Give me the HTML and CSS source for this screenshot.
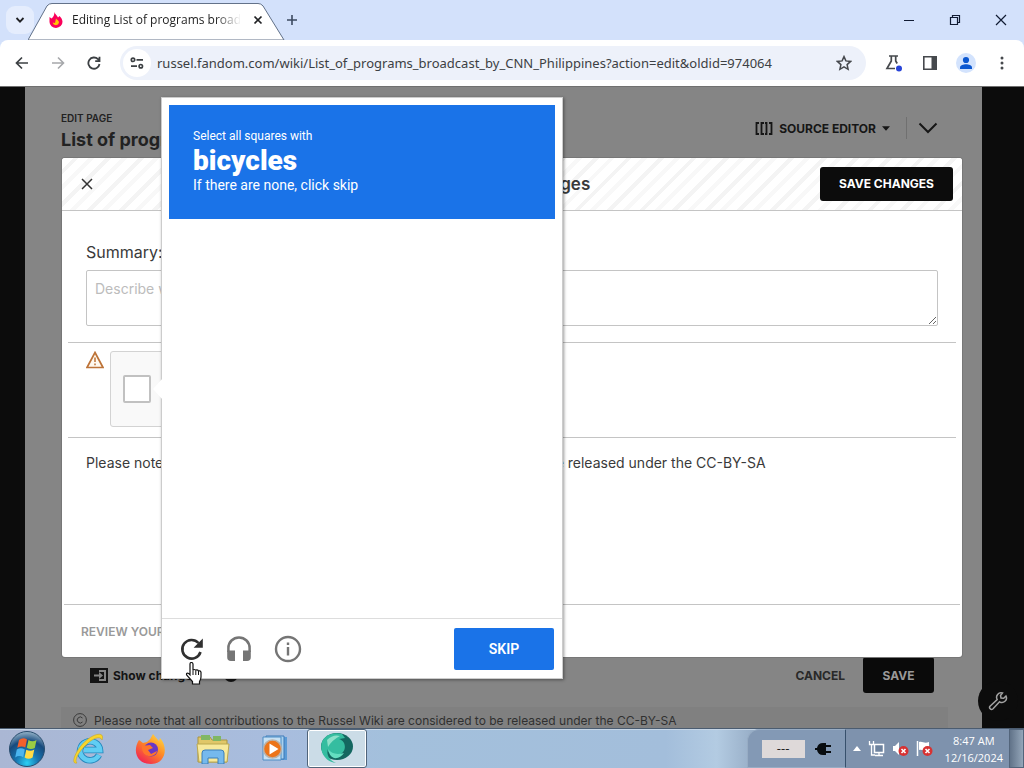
FILE: index.html
```html
<!DOCTYPE html>
<html lang="en">
<head>
<meta charset="utf-8">
<title>Editing List of programs broadcast by CNN Philippines</title>
<link rel="stylesheet" href="styles.css">
</head>
<body>
<header class="tabstrip">
  <button class="tab-search" aria-label="Search tabs"><svg width="10" height="10" viewBox="0 0 10 10"><path d="M1.5 3l3.5 3.600L8.500 3" fill="none" stroke="#202124" stroke-width="1.800"/></svg></button>
  <div class="tab">
    <svg class="tab-shape" viewBox="0 0 260 38" preserveAspectRatio="none"><path d="M0 38L19 3Q21 .5 24 .5H230Q233 .5 235 3L256 38Z" fill="#fff" stroke="#5f6f86"/></svg>
    <svg class="flame" width="14" height="16" viewBox="0 0 14 16"><path d="M5.500 0C6 2 8 3.500 9 5.500L10.500 4C12 5.500 13.500 7.500 13.500 9.800A6.500 6 0 0 1 .5 10V5L2.500 6.500C4.500 5 5.500 2.500 5.500 0Z" fill="#fa005a"/><path d="M7 6.500C8 8 10 8.500 10 10.500A3.200 3.200 0 0 1 3.700 10.500L6 11Z" fill="#ffc500"/></svg>
    <span class="tab-title">Editing List of programs broad</span>
    <button class="tab-close" aria-label="Close tab"><svg width="10" height="10" viewBox="0 0 10 10"><path d="M1.500 1.500l7 7m0-7l-7 7" stroke="#202124" stroke-width="1.700"/></svg></button>
  </div>
  <button class="new-tab" aria-label="New tab"><svg width="12" height="12" viewBox="0 0 12 12"><path d="M6 1v10M1 6h10" stroke="#3c4a60" stroke-width="1.600"/></svg></button>
  <div class="window-buttons">
    <button aria-label="Minimize"><svg width="12" height="12" viewBox="0 0 12 12"><path d="M1 6.500h10" stroke="#111b33"/></svg></button>
    <button aria-label="Restore"><svg width="12" height="12" viewBox="0 0 12 12"><path d="M1.500 3.500h7v7h-7zM3.500 3.500v-2h7v7h-2" fill="none" stroke="#111b33" stroke-width="1.200"/></svg></button>
    <button aria-label="Close"><svg width="12" height="12" viewBox="0 0 12 12"><path d="M1 1l10 10M11 1L1 11" stroke="#111b33" stroke-width="1.200"/></svg></button>
  </div>
</header>
<nav class="toolbar">
  <button aria-label="Back"><svg width="14" height="14" viewBox="0 0 14 14"><path d="M13 7H2M7 1.500L1.500 7 7 12.500" fill="none" stroke="#3c4043" stroke-width="1.700"/></svg></button>
  <button aria-label="Forward"><svg width="14" height="14" viewBox="0 0 14 14"><path d="M1 7h11M7 1.500L12.500 7 7 12.500" fill="none" stroke="#a6a8ab" stroke-width="1.600"/></svg></button>
  <button aria-label="Reload"><svg width="14" height="14" viewBox="0 0 14 14"><path d="M12.500 8A5.600 5.600 0 1 1 11 3.200L12.200 4.500M12.500 .8v4.400H8.200" fill="none" stroke="#3c4043" stroke-width="1.800"/></svg></button>
  <div class="omnibox">
    <button class="site-info" aria-label="View site information"><svg width="14" height="12" viewBox="0 0 14 12"><g fill="none" stroke="#3c4043" stroke-width="1.700"><circle cx="3" cy="2.800" r="1.700"/><path d="M6.500 2.800H13M1 9.200h6"/><circle cx="10.800" cy="9.200" r="1.700"/></g></svg></button>
    <input class="address" aria-label="Address" value="russel.fandom.com/wiki/List_of_programs_broadcast_by_CNN_Philippines?action=edit&amp;oldid=974064">
    <button class="star" aria-label="Bookmark"><svg width="16" height="16" viewBox="0 0 16 16"><path d="M8 1.600l1.900 4.300 4.700.5-3.500 3.200 1 4.700L8 11.900l-4.100 2.400 1-4.700L1.400 6.400l4.700-.5z" fill="none" stroke="#46494d" stroke-width="1.500"/></svg></button>
  </div>
  <div class="tools">
    <button aria-label="Experiments"><svg width="18" height="18" viewBox="0 0 18 18"><path d="M4 2h9M6.300 2v5L2 14.500h8M10.700 2v5l1.500 2.500" fill="none" stroke="#46494d" stroke-width="1.700"/><circle cx="14" cy="14.500" r="3" fill="#2844d8"/></svg></button>
    <button aria-label="Side panel"><svg width="14" height="14" viewBox="0 0 14 14"><path d="M.8.8h12.400v12.400H.8z" fill="none" stroke="#46494d" stroke-width="1.600"/><path d="M8.500 1H13v12H8.500z" fill="#46494d"/></svg></button>
    <button aria-label="Profile"><svg width="20" height="20" viewBox="0 0 20 20"><circle cx="10" cy="10" r="10" fill="#d3e3fd"/><circle cx="10" cy="7" r="3.100" fill="#0b57d0"/><path d="M4 16v-1.500C4 12.300 7.500 11.200 10 11.200s6 1.100 6 3.300V16z" fill="#0b57d0"/></svg></button>
    <button aria-label="Menu"><svg width="4" height="16" viewBox="0 0 4 16"><g fill="#46494d"><circle cx="2" cy="3" r="1.500"/><circle cx="2" cy="8" r="1.500"/><circle cx="2" cy="13" r="1.500"/></g></svg></button>
  </div>
</nav>

<main class="viewport">
  <section class="page">
    <div class="page-head">
      <div>
        <p class="eyebrow">EDIT PAGE</p>
        <h1 class="page-title">List of programs</h1>
      </div>
      <div class="page-actions">
        <button class="source"><svg width="18" height="13" viewBox="0 0 18 13"><path d="M4 1H1.500v11H4M9 1H6.500v11H9M10 1h1.500v11H10M14 1h2.500v11H14" fill="none" stroke="#161616" stroke-width="1.800"/></svg>SOURCE EDITOR<svg width="8" height="5" viewBox="0 0 8 5"><path d="M0 .3h8L4 4.700z" fill="#161616"/></svg></button>
        <button class="collapse" aria-label="Collapse"><svg width="20" height="12" viewBox="0 0 20 12"><path d="M1.500 1.500L10 10l8.500-8.500" fill="none" stroke="#161616" stroke-width="2"/></svg></button>
      </div>
    </div>
    <div class="page-foot">
      <div class="foot-row">
        <button class="show"><svg width="18" height="15" viewBox="0 0 18 15"><path d="M0 0h18v15H0z" fill="#141414"/><path d="M9 2h7v11H9v-2h5V4H9zM4 6.500h5V4l4 3.500L9 11V8.500H4z" fill="#858585"/></svg>Show changes</button>
        <button class="help" aria-label="Help"><svg width="16" height="16" viewBox="0 0 16 16"><circle cx="8" cy="8" r="7" fill="#141414"/></svg></button>
        <button class="cancel">CANCEL</button>
        <button class="save">SAVE</button>
      </div>
      <p class="notice"><svg width="14" height="14" viewBox="0 0 14 14"><g fill="none" stroke="#393939"><circle cx="7" cy="7" r="6.400"/><path d="M9.500 5A3 3 0 1 0 9.500 9"/></g></svg>Please note that all contributions to the Russel Wiki are considered to be released under the CC-BY-SA</p>
    </div>
  </section>
  <button class="wrench" aria-label="My tools"><svg width="20" height="20" viewBox="0 0 20 20"><path d="M2 15.200L9.200 8.500A4.500 4.500 0 0 1 14.500 2L12.500 4.500l.5 2.500 2.700.2L18 5A4.500 4.500 0 0 1 11.600 10.800L4.800 18A2 2 0 0 1 2 15.200Z" fill="none" stroke="#a2a2a2" stroke-width="1.500"/></svg></button>

  <div class="overlay">
    <form class="dialog" role="dialog" aria-labelledby="dialog-title">
      <div class="dialog-head">
        <button type="button" class="dismiss" aria-label="Close dialog"><svg width="12" height="12" viewBox="0 0 12 12"><path d="M1 1l10 10M11 1L1 11" stroke="#333" stroke-width="1.500"/></svg></button>
        <h2 id="dialog-title">Save your changes</h2>
        <button type="button" class="save-changes">SAVE CHANGES</button>
      </div>
      <div class="dialog-body">
        <div class="summary">
          <label for="summary">Summary:</label>
          <textarea id="summary" placeholder="Describe what you changed"></textarea>
        </div>
        <div class="verify">
          <svg width="18" height="18" viewBox="0 0 18 18"><path d="M9 1.500L17 16.500H1z" fill="#fff9ef" stroke="#bd7338" stroke-width="1.700"/><path d="M9 6.500v4.500M9 12.500v1.700" stroke="#bd7338" stroke-width="1.500"/></svg>
          <label class="robot"><input type="checkbox">I'm not a robot</label>
        </div>
        <p class="license">Please note that all contributions to the Russel Wiki are considered to be released under the CC-BY-SA</p>
      </div>
      <div class="dialog-foot"><button type="button">REVIEW YOUR CHANGES</button></div>
    </form>
  </div>

  <section class="challenge" aria-label="Image challenge">
    <div class="prompt">
      <p>Select all squares with</p>
      <strong>bicycles</strong>
      <p class="hint">If there are none, click skip</p>
    </div>
    <div class="tiles"></div>
    <div class="challenge-foot">
      <button aria-label="Get a new challenge"><svg width="24" height="24" viewBox="0 0 24 24"><path d="M20.500 15A9.300 9.300 0 1 1 18.500 6" fill="none" stroke="#303030" stroke-width="2.600"/><path d="M22.800 1.500v9.200h-9.200z" fill="#303030"/></svg></button>
      <button aria-label="Get an audio challenge"><svg width="26" height="26" viewBox="-1 0 26 26"><path d="M1.400 16v-4a10.600 10.600 0 0 1 21.200 0v4" fill="none" stroke="#757575" stroke-width="2.500"/><path d="M.2 14.500H8V25H4a3.800 3.800 0 0 1-3.800-3.800zM16 14.500h7.800v6.700A3.800 3.800 0 0 1 20 25h-4z" fill="#757575"/></svg></button>
      <button aria-label="Help with this challenge"><svg width="28" height="28" viewBox="0 0 28 28"><circle cx="14" cy="14" r="12" fill="none" stroke="#757575" stroke-width="2.400"/><path d="M14 12v8.500M14 7.500v2.600" stroke="#757575" stroke-width="2.400"/></svg></button>
      <button class="skip">SKIP</button>
    </div>
  </section>
  <svg class="cursor" width="20" height="24" viewBox="0 0 20 24"><path d="M5 2q0-1.500 1.400-1.500T8 2v6.500q0-1 1.300-1t1.500 1.200q.2-.9 1.300-.8t1.400 1.300q.3-.6 1.200-.4T16 10.300V15q0 2-1.500 4.500V22H7.500v-2.500L2 13.500q-1-1.500 0-2.200t3 1.500z" fill="#fff" stroke="#111" stroke-width="1.200"/><path d="M8 8.500V13M10.800 9V13M13.500 9.500V13" stroke="#111"/></svg>
</main>

<footer class="taskbar">
  <button class="start" aria-label="Start"><svg width="38" height="38" viewBox="0 0 38 38"><defs><radialGradient id="orb" cx=".5" cy=".9" r=".9"><stop offset="0" stop-color="#2bd0f4"/><stop offset=".35" stop-color="#1776b1"/><stop offset=".7" stop-color="#174a7d"/><stop offset="1" stop-color="#96b4c9"/></radialGradient></defs><circle cx="19" cy="19" r="17.500" fill="url(#orb)" stroke="#294d6e"/><path d="M11 10q4-3 8-.5l-1.700 8q-4-2-8 .3z" fill="#f2612c"/><path d="M20.500 10q4 2.500 8 0l-1.700 8q-4 2.300-8-.2z" fill="#9bcc43"/><path d="M8.800 19.500q4-2.300 8 0l-1.600 7.700q-4-2.500-8 .2z" fill="#4bb5ef"/><path d="M18.300 19.700q4 2.300 8-.2l-1.700 8q-4 2.500-8 0z" fill="#ffdb45"/></svg></button>
  <button aria-label="Internet Explorer"><svg width="34" height="34" viewBox="0 0 34 34"><path d="M27 23A10 9.500 0 1 1 28 18H12" fill="none" stroke="#2588bd" stroke-width="6.500"/><path d="M27 23A10 9.500 0 1 1 28 18H12" fill="none" stroke="#60cdf3" stroke-width="4.800"/><path d="M5 31C-3 33 5 15 16 7 24 1 33 0 30 8 28 3 20 7 15 12 6 20 2 29 5 31z" fill="#f8d52b" stroke="#c4a52a" stroke-width=".6"/></svg></button>
  <button aria-label="Firefox"><svg width="32" height="32" viewBox="0 0 32 32"><defs><linearGradient id="fox" x1=".9" y1="0" x2=".2" y2="1"><stop offset="0" stop-color="#ffe047"/><stop offset=".45" stop-color="#ff8c24"/><stop offset="1" stop-color="#f01d57"/></linearGradient></defs><path d="M4 7l4 3 4-1q4-3 6-8 3 4 6 7l1-3c9 10 5 26-9 26C2 31-3 18 4 7z" fill="url(#fox)"/><circle cx="16" cy="16.500" r="7" fill="#6937c7"/><path d="M7 13l8-1 3 3-5 2 3 4 6-3c-2 8-16 7-15-5z" fill="#ff752b"/></svg></button>
  <button aria-label="File Explorer"><svg width="34" height="30" viewBox="0 0 34 30"><path d="M2 3h12l2 3h15v22H2z" fill="#e0c768" stroke="#a99540"/><path d="M5 1h9v5H5zM17 2h8v5h-8z" fill="#80b765"/><path d="M1 10h32l-2 18H3z" fill="#f7e99b" stroke="#bca951"/><path d="M6 30V19q0-3 3-3h16q3 0 3 3v11h-6v-6H12v6z" fill="#75b9ed" stroke="#3d7fb9"/></svg></button>
  <button aria-label="Media Player"><svg width="28" height="28" viewBox="0 0 28 28"><path d="M8 2h18v23H8z" fill="#5b9bd6"/><path d="M5 1h18v23H5z" fill="#a9d1ee" stroke="#3c79b7"/><path d="M2 2h18v23H2z" fill="#c6e1f4" stroke="#4d8cc3"/><circle cx="11.500" cy="14" r="9" fill="#ec7419" stroke="#b9b1a9" stroke-width="1.500"/><path d="M8.500 8.500l9 5.500-9 5.500z" fill="#fff"/></svg></button>
  <button class="running" aria-label="Browser"><svg width="34" height="32" viewBox="0 0 34 32"><ellipse cx="17" cy="14.500" rx="16" ry="13.500" fill="#146760"/><path d="M2 20C-2 7 9-1 22 2l3 4-6 1c8 2 8 14-1 16-6 1-10-2-10-6-2 5 1 11 8 14C9 30 4 26 2 20z" fill="#35bda0"/><path d="M7 8q6-6 13-4-8 4-12 11z" fill="#8de0c9"/><path d="M8 17q5 7 16 4-4 6-10 5-5-2-6-9z" fill="#64dec0"/></svg></button>
  <div class="tray">
    <div class="power"><span class="battery">---</span><svg width="16" height="12" viewBox="0 0 16 12"><path d="M0 5h2q1-5 6-5h3v2h5v2h-5v4h5v2h-5v2H8Q3 12 2 7H0z" fill="#080c10"/></svg></div>
    <div class="status">
      <svg width="8" height="5" viewBox="0 0 8 5"><path d="M4 0l4 5H0z" fill="#fff"/></svg>
      <svg width="17" height="17" viewBox="0 0 17 17"><path d="M6.500 4.500h9v8h-9z" fill="#6e839f" stroke="#fff" stroke-width="1.500"/><path d="M11 13v2.500M7 15.500h8M1.500 1v3.500h4V1M3.500 4.500V15H7" fill="none" stroke="#fff" stroke-width="1.300"/></svg>
      <svg width="17" height="17" viewBox="0 0 17 17"><path d="M1 6h2l4-4v13l-4-4H1z" fill="#fff"/><circle cx="11.500" cy="11" r="5" fill="#d83232"/><path d="M9.500 9l4 4m0-4l-4 4" stroke="#fff" stroke-width="1.600"/></svg>
      <svg width="17" height="17" viewBox="0 0 17 17"><path d="M1.500 1v15" stroke="#fff" stroke-width="1.500"/><path d="M3 2c4-1 5 2 10 0v8c-5 2-6-1-10 0z" fill="#fff"/><circle cx="11.500" cy="11" r="5" fill="#d83232"/><path d="M9.500 9l4 4m0-4l-4 4" stroke="#fff" stroke-width="1.600"/></svg>
      <time class="clock">8:47 AM<br>12/16/2024</time>
    </div>
    <button class="desktop" aria-label="Show desktop"></button>
  </div>
</footer>
</body>
</html>
```
FILE: styles.css
```css
* { box-sizing: border-box; }
body { margin: 0; height: 100vh; display: flex; flex-direction: column; overflow: hidden; background: #d3e1fb; font-family: Inter, "Open Sans", sans-serif; color: #333; }
button { border: 0; padding: 0; background: none; font: inherit; color: inherit; display: inline-flex; align-items: center; justify-content: center; }
p, h1, h2 { margin: 0; }
svg { flex: none; display: block; }

.tabstrip { flex: 0 0 40px; display: flex; padding-left: 6px; font-family: "Open Sans", sans-serif; }
.tab-search { width: 28px; height: 28px; margin-top: 6px; border-radius: 9px; background: #e5edfd; }
.tab { position: relative; width: 260px; margin: 3px 0 0 -6px; padding: 0 22px 4px 21px; display: flex; align-items: center; gap: 9px; }
.tab-shape { position: absolute; inset: 0; width: 100%; height: 100%; }
.flame, .tab-title, .tab-close { position: relative; }
.tab-title { flex: 1; white-space: nowrap; font-size: 12px; color: #1f1f1f; mask-image: linear-gradient(90deg, #000 85%, transparent); }
.tab-close { width: 20px; height: 20px; }
.new-tab { width: 28px; height: 40px; margin-left: -10px; }
.window-buttons { margin-left: auto; display: flex; }
.window-buttons button { width: 46px; height: 40px; }

.toolbar { flex: 0 0 46px; display: flex; align-items: center; padding: 0 12px; background: #fff; border-radius: 8px 8px 0 0; font-family: "Open Sans", sans-serif; }
.toolbar > button { width: 20px; height: 32px; margin-right: 16px; }
.omnibox { flex: 1; height: 34px; display: flex; align-items: center; padding: 0 12px 0 3px; border-radius: 17px; background: #edf1fa; }
.site-info { width: 28px; height: 28px; border-radius: 50%; background: #fff; }
.address { flex: 1; min-width: 0; padding: 0 6px; border: 0; background: none; font: 13px "Noto Sans", sans-serif; color: #3c4043; }
.star { width: 20px; height: 20px; }
.tools { display: flex; align-items: center; gap: 16px; padding-left: 18px; }
.tools button { min-width: 20px; height: 20px; }

.viewport { flex: 1; min-height: 0; position: relative; display: flex; background: #0c0c0c; border-top: 1px solid #707070; }
.page { flex: 1; margin: 0 42px 0 25px; padding: 24px 34px 0 36px; display: flex; flex-direction: column; justify-content: space-between; overflow: hidden; background: #858585; color: #222; }
.page-head { display: flex; justify-content: space-between; }
.eyebrow { font-size: 10px; line-height: 14px; font-weight: 600; }
.page-title { margin-top: 3px; font-size: 18px; line-height: 24px; font-weight: 700; }
.page-actions { display: flex; height: 34px; padding-right: 10px; color: #161616; }
.source { gap: 6px; padding-right: 16px; font-size: 12px; font-weight: 700; }
.collapse { align-self: center; height: 22px; padding-left: 11px; border-left: 1px solid #707070; }
.foot-row { display: flex; align-items: center; padding: 0 14px 0 29px; color: #141414; font-size: 12px; font-weight: 700; }
.show { gap: 5px; }
.help { margin-left: 24px; }
.cancel { margin-left: auto; color: #292929; }
.save { width: 71px; height: 36px; margin-left: 18px; border-radius: 3px; background: #0a0a0a; color: #999; }
.notice { display: flex; gap: 7px; margin-top: 14px; padding: 6px 12px 0; height: 21px; background: #808080; color: #303030; font-size: 12px; line-height: 16px; white-space: nowrap; }
.wrench { position: absolute; right: 6px; bottom: 7px; width: 40px; height: 40px; border-radius: 50%; background: #0c0c0c; }

.overlay { position: absolute; inset: 0; display: flex; align-items: center; justify-content: center; }
.dialog { width: 88%; max-width: 900px; height: 78%; display: flex; flex-direction: column; border-radius: 3px; overflow: hidden; background: #fff; box-shadow: 0 0 0 1px #777; color: #3a3a3a; }
.dialog-head { flex: 0 0 53px; display: grid; grid-template-columns: 1fr auto 1fr; align-items: center; padding: 0 9px; border-bottom: 1px solid #c4c4c4; background: repeating-linear-gradient(135deg, #fff 0 8px, #f4f4f4 8px 12px, #fff 12px 19px, #f8f8f8 19px 23px); }
.dismiss { width: 32px; height: 32px; }
.dialog-head h2 { font-size: 17px; line-height: 24px; font-weight: 600; }
.save-changes { justify-self: end; width: 133px; height: 34px; border-radius: 3px; background: #0c0c0c; color: #fff; font-size: 12px; font-weight: 700; }
.dialog-body { flex: 1; padding: 0 6px; }
.summary { padding: 31px 18px 16px; border-bottom: 1px solid #c4c4c4; }
.summary label { display: block; font-size: 16px; line-height: 20px; }
.summary textarea { display: block; width: 100%; height: 56px; margin-top: 8px; padding: 8px; border: 1px solid #c4c4c4; border-radius: 2px; font: 14px/20px Inter, sans-serif; }
.summary textarea::placeholder { color: #bcbcbc; }
.verify { display: flex; gap: 6px; padding: 8px 18px 10px; border-bottom: 1px solid #c4c4c4; }
.robot { width: 304px; height: 76px; display: flex; align-items: center; gap: 12px; padding-left: 12px; border: 1px solid #d3d3d3; border-radius: 3px; background: #f9f9f9; font: 14px Roboto, sans-serif; }
.robot input { appearance: none; width: 28px; height: 28px; margin: 0; border: 2px solid #c1c1c1; border-radius: 2px; background: #fff; }
.license { padding: 15px 18px; font-size: 14px; line-height: 20px; white-space: nowrap; }
.dialog-foot { flex: 0 0 53px; display: flex; margin: 0 2px; padding: 0 17px; border-top: 1px solid #c4c4c4; color: #999; font-size: 12px; font-weight: 600; }

.challenge { position: absolute; left: 161px; top: 10px; width: 402px; height: 582px; display: flex; flex-direction: column; border: 1px solid #ccc; background: #fff; box-shadow: 1px 1px 3px rgba(0, 0, 0, .4); font-family: Roboto, sans-serif; }
.challenge::before { content: ""; position: absolute; left: -9px; top: 280px; width: 10px; height: 22px; background: #fff; clip-path: polygon(0 50%, 100% 0, 100% 100%); }
.prompt { margin: 7px; height: 114px; padding: 23px 24px; background: #1a73e8; color: #fff; font-size: 12px; line-height: 16px; }
.prompt strong { display: block; font-size: 28px; line-height: 33px; font-weight: 900; }
.prompt .hint { font-size: 14px; }
.tiles { flex: 1; }
.challenge-foot { flex: 0 0 60px; display: flex; align-items: center; gap: 22px; padding: 0 8px 0 18px; border-top: 1px solid #ddd; }
.skip { width: 100px; height: 42px; margin-left: auto; border-radius: 2px; background: #1a73e8; color: #fff; font-size: 14px; font-weight: 600; }
.cursor { position: absolute; left: 185px; top: 575px; }

.taskbar { flex: 0 0 40px; display: flex; border-top: 1px solid #4b5c70; box-shadow: inset 0 1px #c5d5e6; background: linear-gradient(90deg, #aab7d4, #a8bdde 28%, #a3c0dc 38%, #a3bedb 65%, #b3cbe2 70%, #8499b4 76%); }
.taskbar > button { width: 62px; }
.taskbar .start { width: 58px; padding-right: 4px; }
.taskbar .running { width: 60px; margin-left: 1px; padding-bottom: 2px; border: 1px solid #50647a; border-radius: 3px; box-shadow: inset 0 0 0 1px #fff; background: #cbdce7; }
.tray { margin-left: auto; display: flex; font-family: "Open Sans", sans-serif; color: #fff; }
.power { width: 99px; display: flex; align-items: center; justify-content: center; gap: 10px; border: 1px solid #97acc4; border-right-color: #37506c; border-radius: 12px 0 0; background: #8399b5; }
.battery { width: 43px; height: 18px; background: #ded9d9; color: #222; font-size: 13px; line-height: 16px; text-align: center; }
.status { display: flex; align-items: center; gap: 7px; padding: 0 6px 0 7px; background: #7e92ad; }
.clock { margin-left: 5px; font-size: 11px; line-height: 17px; text-align: center; }
.desktop { width: 15px; border: 1px solid #53657b; background: linear-gradient(90deg, #617389, #94a6b9); }
```
